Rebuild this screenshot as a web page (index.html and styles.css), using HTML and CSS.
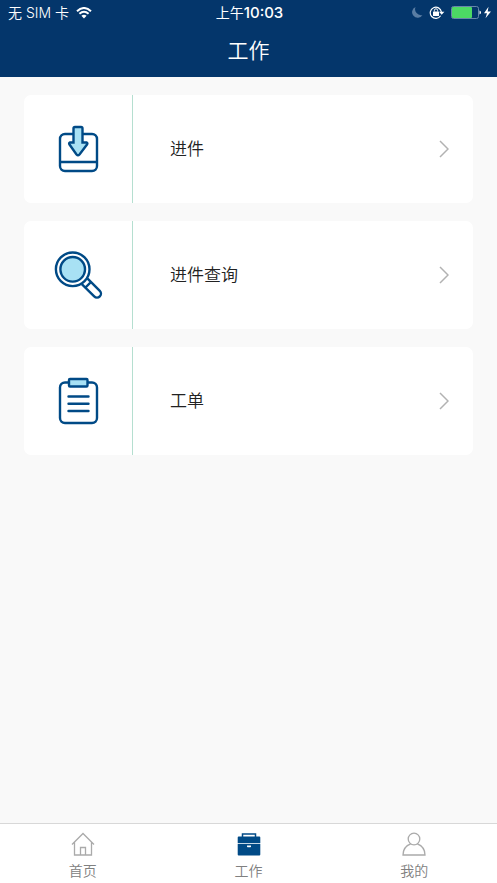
FILE: index.html
```html
<!DOCTYPE html>
<html lang="zh-CN">
<head>
<meta charset="utf-8">
<meta name="viewport" content="width=device-width, initial-scale=1">
<title>工作</title>
<link rel="stylesheet" href="styles.css">
</head>
<body>
<header class="header">
  <div class="status">
    <div class="status-side">
      <span>无 SIM 卡</span>
      <svg width="16" height="12" viewBox="0 0 16 12" fill="none" stroke="#fff" stroke-width="2" aria-hidden="true">
        <path d="M1 4.2Q8-2.2 15 4.2M3.4 6.8Q8 2.6 12.6 6.8"/>
        <path d="M8 11.5L5.4 8.800Q8 6.6 10.6 8.800Z" fill="#fff" stroke="none"/>
      </svg>
    </div>
    <span class="time">上午<span class="clock">10:03</span></span>
    <div class="status-side status-end">
      <svg width="80" height="14" viewBox="0 0 80 14" fill="none" aria-hidden="true">
        <path d="M4.500 1A5.600 5.600 0 1 0 11.500 9A6 6 0 0 1 4.500 1Z" fill="#5a7da3"/>
        <path d="M29.600 9.800A5.600 5.600 0 1 1 30.400 6" stroke="#fff" stroke-width="1.200"/>
        <path d="M28 5.800h5.400l-2.700 3z" fill="#fff"/>
        <rect x="22" y="5.500" width="6" height="4.500" rx=".5" fill="#fff"/>
        <path d="M23.400 5.500V4.400a1.600 1.600 0 0 1 3.200 0v1.100" stroke="#fff"/>
        <rect x="40.500" y=".5" width="27" height="12" rx="2" stroke="#6886aa"/>
        <rect x="41" y="1" width="20" height="11" rx="1" fill="#4cd964"/>
        <path d="M68.500 4.500q1.500 .5 1.500 2t-1.500 2z" fill="#fff"/>
        <path d="M77.500 .8L73 7.300h3l-1.500 5L80 5.600h-3.300z" fill="#fff"/>
      </svg>
    </div>
  </div>
  <h1 class="title">工作</h1>
</header>

<main class="list">
  <a class="card" href="#">
    <span class="card-icon">
      <svg width="54" height="54" viewBox="0 0 54 54" aria-hidden="true">
        <rect x="9" y="12" width="37" height="37" rx="5"/>
        <path d="M9 40h37"/>
        <path class="tint" d="M24 5h6q1.500 0 1.500 1.500V20.500h4q1.500 .5 .5 2l-7.500 10q-1.500 1.500-3 0l-7-10q-1-1.500 .5-2h3.500V6.500Q22.500 5 24 5Z"/>
      </svg>
    </span>
    <span class="card-label">进件</span>
    <svg class="chevron" width="10" height="18" viewBox="0 0 10 18" aria-hidden="true"><path d="M1 1l8 8-8 8"/></svg>
  </a>
  <a class="card" href="#">
    <span class="card-icon">
      <svg width="54" height="54" viewBox="0 0 54 54" aria-hidden="true">
        <circle cx="21.700" cy="21.300" r="16.800"/>
        <circle class="tint" cx="21.700" cy="21.300" r="12.300"/>
        <path d="M30.800 36.200L43.200 48.400A3.900 3.900 0 0 0 48.800 42.800L36.600 30.600M34.500 39.500l5.600-5.600"/>
      </svg>
    </span>
    <span class="card-label">进件查询</span>
    <svg class="chevron" width="10" height="18" viewBox="0 0 10 18" aria-hidden="true"><path d="M1 1l8 8-8 8"/></svg>
  </a>
  <a class="card" href="#">
    <span class="card-icon">
      <svg width="54" height="54" viewBox="0 0 54 54" aria-hidden="true">
        <rect x="9" y="8.500" width="37" height="40.500" rx="5"/>
        <rect class="tint" x="18" y="5" width="18.500" height="7.500" rx="1"/>
        <path d="M17.500 22.500h20M17.500 29.700h20M17.500 37h20" stroke-linecap="round"/>
      </svg>
    </span>
    <span class="card-label">工单</span>
    <svg class="chevron" width="10" height="18" viewBox="0 0 10 18" aria-hidden="true"><path d="M1 1l8 8-8 8"/></svg>
  </a>
</main>

<nav class="tabs">
  <a class="tab" href="#">
    <svg width="26" height="26" viewBox="0 0 26 26" aria-hidden="true"><path d="M2 13.500L13 2.500l11 11M4.500 11v13h17V11M10.500 24v-7.500h5V24"/></svg>
    <span>首页</span>
  </a>
  <a class="tab" href="#" aria-current="page">
    <svg class="solid" width="26" height="26" viewBox="0 0 26 26" aria-hidden="true">
      <path d="M6.500 6V3h13v3" fill="none" stroke="#004a86" stroke-width="1.500"/>
      <path d="M1.700 12V6.500q0-1 1-1h20.600q1 0 1 1V12zM1.700 13h22.600v10.500q0 1-1 1H2.700q-1 0-1-1z"/>
      <path fill="#c4d7e5" d="M1.700 12h22.600v1H1.700z"/>
      <path fill="#fff" d="M11 14.500h4v1q0 .7-.7 .7h-2.600q-.7 0-.7-.7z"/>
    </svg>
    <span>工作</span>
  </a>
  <a class="tab" href="#">
    <svg width="26" height="26" viewBox="0 0 26 26" aria-hidden="true"><circle cx="13" cy="8" r="5.800"/><path d="M9.700 12.800C5 14.500 2 18.500 2 24h22c0-5.500-3-9.500-7.700-11.200"/></svg>
    <span>我的</span>
  </a>
</nav>
</body>
</html>
```
FILE: styles.css
```css
* {
  box-sizing: border-box;
}

body {
  margin: 0;
  min-height: 100vh;
  display: flex;
  flex-direction: column;
  background: #f9f9f9;
  color: #222;
  font-family: Inter, "Noto Sans CJK SC", sans-serif;
  font-weight: 350;
}

a {
  color: inherit;
  text-decoration: none;
}

svg {
  display: block;
  flex: none;
}

.header {
  background: #04366b;
  color: #fff;
  padding-bottom: 10px;
}

.status {
  display: flex;
  align-items: center;
  height: 26px;
  padding: 0 6px 0 8px;
  font-size: 14px;
  line-height: 26px;
}

.status-side {
  flex: 1;
  display: flex;
  align-items: center;
  gap: 7px;
}

.status-end {
  justify-content: flex-end;
}

.time {
  font-weight: 400;
}

.clock {
  font-size: 15px;
  font-weight: 500;
}

.title {
  margin: 8px 0 0;
  font-size: 21px;
  font-weight: 350;
  line-height: 33px;
  text-align: center;
}

.list {
  flex: 1;
  display: flex;
  flex-direction: column;
  gap: 18px;
  padding: 18px 24px;
}

.card {
  display: flex;
  align-items: center;
  height: 108px;
  padding-right: 24px;
  border-radius: 7px;
  background: #fff;
}

.card-icon {
  display: flex;
  align-items: center;
  justify-content: center;
  align-self: stretch;
  width: 109px;
  border-right: 1px solid #b5dfd0;
}

.card-icon svg {
  fill: none;
  stroke: #004a86;
  stroke-width: 2.4;
}

.card-icon .tint {
  fill: #a8e1f4;
}

.card-label {
  flex: 1;
  padding-left: 37px;
  font-size: 17px;
  line-height: 27px;
}

.chevron {
  fill: none;
  stroke: #b2b2b2;
  stroke-width: 1.5;
}

.tabs {
  display: flex;
  height: 60px;
  border-top: 1px solid #d8d8d8;
  background: #fff;
}

.tab {
  flex: 1;
  display: flex;
  flex-direction: column;
  align-items: center;
  padding-top: 7px;
  color: #808080;
  font-size: 14px;
  line-height: 27px;
}

.tab svg {
  fill: none;
  stroke: #aaa;
  stroke-width: 1.3;
}

.tab .solid {
  fill: #004a86;
  stroke: none;
}
```
